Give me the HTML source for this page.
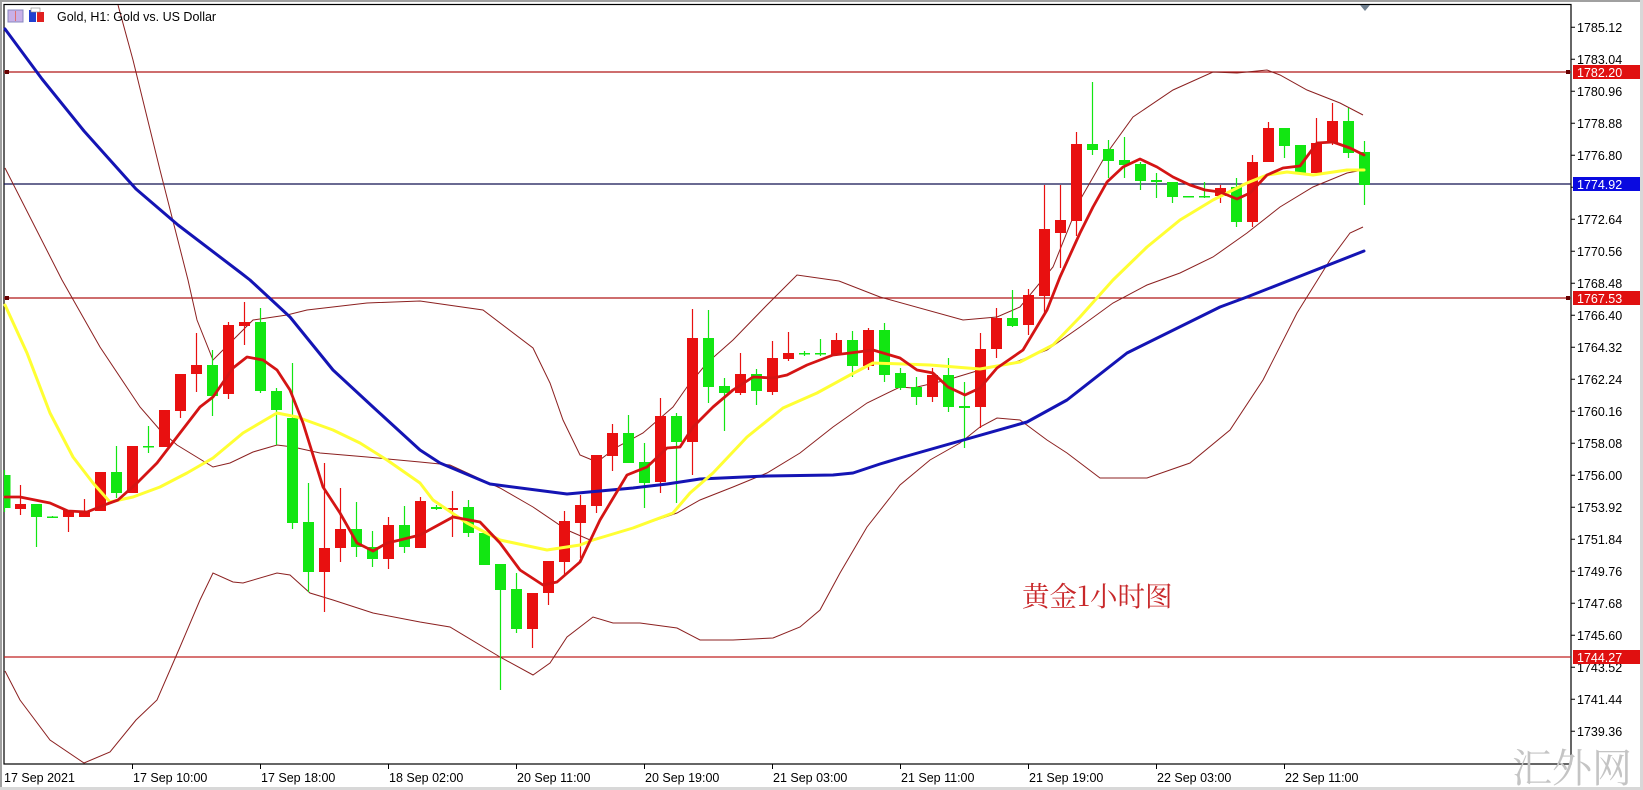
<!DOCTYPE html>
<html><head><meta charset="utf-8"><style>
html,body{margin:0;padding:0;background:#fff;width:1643px;height:790px;overflow:hidden}
svg{display:block}
text{font-family:"Liberation Sans",Tahoma,sans-serif;font-size:12.5px;fill:#000}
</style></head><body>
<svg width="1643" height="790" viewBox="0 0 1643 790" xmlns="http://www.w3.org/2000/svg">
<rect x="0" y="0" width="1643" height="790" fill="#fff"/>
<rect x="0" y="0" width="1643" height="2" fill="#a0a0a0"/>
<rect x="0" y="0" width="2" height="790" fill="#a0a0a0"/>
<rect x="0" y="787" width="1643" height="3" fill="#d8d8d8"/>
<rect x="1640" y="0" width="3" height="790" fill="#d8d8d8"/>
<!-- frame -->
<rect x="4" y="4.5" width="1567" height="759.5" fill="none" stroke="#000" stroke-width="1.2"/>
<!-- horizontal lines -->
<g stroke-width="1.2">
<line x1="4" x2="1571" y1="72" y2="72" stroke="#b01818"/>
<line x1="4" x2="1571" y1="184" y2="184" stroke="#101050"/>
<line x1="4" x2="1571" y1="298" y2="298" stroke="#b01818"/>
<line x1="4" x2="1571" y1="657" y2="657" stroke="#c02020"/>
</g>
<g fill="#600">
<rect x="5" y="70" width="4" height="4"/><rect x="1566" y="70" width="4" height="4"/>
<rect x="5" y="296" width="4" height="4"/><rect x="1566" y="296" width="4" height="4"/>
</g>
<!-- bollinger -->
<g fill="none" stroke="#8b2020" stroke-width="1">
<polyline points="118,5 133,60 160,170 188,280 197,320 213,360 233,340 253,320 287,315 307,310 367,303 420,301 483,310 533,348 550,383 563,420 580,455 597,462 617,447 643,433 673,407 687,387 707,363 733,340 767,305 797,275 839,281 880,297 963,320 997,317 1020,307 1053,267 1080,200 1107,153 1133,117 1173,90 1213,72 1237,73 1267,70 1280,75 1307,90 1340,103 1363,115"/>
<polyline points="5,168 62,280 100,347 140,407 160,430 177,445 213,467 230,463 253,452 277,445 293,447 320,453 367,457 420,462 450,465 500,488 533,507 567,530 590,540 633,528 677,513 700,500 733,487 767,473 800,453 833,427 867,403 900,387 913,388 947,380 980,370 1013,363 1047,350 1080,327 1113,303 1147,285 1180,273 1213,257 1247,233 1280,207 1313,187 1347,173 1363,170"/>
<polyline points="5,671 20,700 50,740 84,763 110,752 136,720 157,700 180,647 200,600 213,573 233,582 243,583 277,573 290,575 310,593 333,600 373,613 420,622 450,627 500,657 533,675 550,663 567,637 593,617 613,623 640,623 677,628 700,640 733,640 773,638 800,627 820,610 840,573 867,527 900,485 930,460 960,443 980,427 997,418 1020,420 1047,440 1067,453 1100,478 1147,478 1190,463 1230,430 1263,380 1297,313 1330,260 1350,233 1363,227"/>
</g>
<!-- green candles -->
<g stroke="#12e612" stroke-width="1.2" fill="none">
<path d="M4.5 470V512M36.5 504V547M52.5 516V518M116.5 446V498M148.5 426V453M212.5 350V416M260.5 308V393M276.5 388V445M292.5 363V529M308.5 483V592M356.5 502V557M372.5 531V567M404.5 506V553M436.5 505V510M468.5 500V537M484.5 533V565M500.5 564V690M516.5 573V633M628.5 415V463M644.5 443V508M676.5 413V503M708.5 310V403M724.5 378V431M756.5 369V405M804.5 351V356M820.5 339V356M852.5 331V377M884.5 323V382M900.5 368V390M916.5 377V405M948.5 358V412M964.5 382V448M1012.5 290V327M1092.5 82V155M1108.5 140V178M1124.5 137V178M1140.5 162V190M1156.5 173V198M1172.5 182V203M1204.5 182V198M1236.5 178V227M1284.5 128V158M1300.5 145V175M1348.5 108V158M1364.5 141V205"/>
</g>
<g fill="#12e612">
<rect x="5" y="475" width="5.5" height="33"/><rect x="31" y="504" width="11" height="13"/><rect x="47" y="516.5" width="11" height="1.5"/><rect x="111" y="472" width="11" height="21"/><rect x="143" y="446" width="11" height="1.5"/><rect x="207" y="365" width="11" height="31"/><rect x="255" y="322" width="11" height="69"/><rect x="271" y="391" width="11" height="19"/><rect x="287" y="418" width="11" height="105"/><rect x="303" y="522" width="11" height="50"/><rect x="351" y="529" width="11" height="18"/><rect x="367" y="547" width="11" height="12"/><rect x="399" y="525" width="11" height="22"/><rect x="431" y="507" width="11" height="2"/><rect x="463" y="507" width="11" height="26"/><rect x="479" y="533" width="11" height="32"/><rect x="495" y="564" width="11" height="26"/><rect x="511" y="589" width="11" height="40"/><rect x="623" y="433" width="11" height="30"/><rect x="639" y="462" width="11" height="21"/><rect x="671" y="416" width="11" height="26"/><rect x="703" y="338" width="11" height="49"/><rect x="719" y="386" width="11" height="7"/><rect x="751" y="374" width="11" height="17"/><rect x="799" y="353" width="11" height="1.5"/><rect x="815" y="353" width="11" height="1.5"/><rect x="847" y="340" width="11" height="26"/><rect x="879" y="330" width="11" height="45"/><rect x="895" y="373" width="11" height="15"/><rect x="911" y="387" width="11" height="10"/><rect x="943" y="375" width="11" height="32"/><rect x="959" y="406" width="11" height="2"/><rect x="1007" y="318" width="11" height="8"/><rect x="1087" y="144" width="11" height="6"/><rect x="1103" y="149" width="11" height="12"/><rect x="1119" y="160" width="11" height="5"/><rect x="1135" y="164" width="11" height="17"/><rect x="1151" y="180" width="11" height="2"/><rect x="1167" y="182" width="11" height="15"/><rect x="1183" y="196" width="11" height="1.5"/><rect x="1199" y="196" width="11" height="1.5"/><rect x="1231" y="187" width="11" height="35"/><rect x="1279" y="128" width="11" height="18"/><rect x="1295" y="145" width="11" height="28"/><rect x="1343" y="121" width="11" height="32"/><rect x="1359" y="152" width="11" height="33"/>
</g>
<!-- red candles -->
<g stroke="#e81010" stroke-width="1.2" fill="none">
<path d="M20.5 485V515M68.5 510V532M84.5 499V517M180.5 374V418M196.5 333V392M228.5 322V399M244.5 302V345M324.5 463V612M340.5 488V562M388.5 517V569M420.5 497V548M452.5 491V537M532.5 593V648M548.5 561V605M564.5 511V575M580.5 495V558M596.5 455V513M612.5 424V471M660.5 398V493M692.5 309V475M740.5 353V395M772.5 341V395M788.5 332V361M836.5 333V356M868.5 328V370M932.5 368V402M980.5 333V428M996.5 308V358M1028.5 289V335M1044.5 185V315M1060.5 185V268M1076.5 132V236M1220.5 185V203M1252.5 155V227M1268.5 122V162M1316.5 118V173M1332.5 103V145"/>
</g>
<g fill="#e81010">
<rect x="15" y="504" width="11" height="5"/><rect x="63" y="510" width="11" height="7"/><rect x="79" y="512" width="11" height="5"/><rect x="95" y="472" width="11" height="39"/><rect x="127" y="446" width="11" height="47"/><rect x="159" y="410" width="11" height="37"/><rect x="175" y="374" width="11" height="37"/><rect x="191" y="365" width="11" height="9"/><rect x="223" y="325" width="11" height="69"/><rect x="239" y="322" width="11" height="4"/><rect x="319" y="548" width="11" height="24"/><rect x="335" y="529" width="11" height="19"/><rect x="383" y="525" width="11" height="34"/><rect x="415" y="501" width="11" height="47"/><rect x="447" y="508" width="11" height="2"/><rect x="527" y="593" width="11" height="36"/><rect x="543" y="561" width="11" height="32"/><rect x="559" y="521" width="11" height="41"/><rect x="575" y="505" width="11" height="18"/><rect x="591" y="455" width="11" height="51"/><rect x="607" y="433" width="11" height="23"/><rect x="655" y="416" width="11" height="66"/><rect x="687" y="338" width="11" height="104"/><rect x="735" y="374" width="11" height="19"/><rect x="767" y="358" width="11" height="34"/><rect x="783" y="353" width="11" height="6"/><rect x="831" y="340" width="11" height="15"/><rect x="863" y="330" width="11" height="36"/><rect x="927" y="375" width="11" height="22"/><rect x="975" y="349" width="11" height="58"/><rect x="991" y="318" width="11" height="31"/><rect x="1023" y="295" width="11" height="30"/><rect x="1039" y="229" width="11" height="67"/><rect x="1055" y="220" width="11" height="13"/><rect x="1071" y="144" width="11" height="77"/><rect x="1215" y="188" width="11" height="8"/><rect x="1247" y="162" width="11" height="60"/><rect x="1263" y="128" width="11" height="34"/><rect x="1311" y="143" width="11" height="30"/><rect x="1327" y="121" width="11" height="22"/>
</g>
<!-- moving averages -->
<g fill="none" stroke-linejoin="round" stroke-linecap="round">
<polyline stroke="#1414b4" stroke-width="3" points="5,29 42,79 84,131 136,189 178,225 241,273 250,280 290,317 333,370 373,407 420,450 440,463 490,484 567,494 633,488 667,484 700,479 767,476 833,475 853,473 880,464 900,458 1027,422 1067,400 1127,353 1220,307 1247,297 1364,251"/>
<polyline stroke="#ffff33" stroke-width="3" points="5,305 27,353 50,413 73,457 93,483 110,502 133,497 160,487 187,473 213,458 243,433 277,413 297,417 333,430 360,443 387,460 420,483 433,500 467,523 500,540 547,550 580,545 593,540 633,528 673,513 690,493 713,473 747,437 783,408 817,393 850,375 873,363 930,365 980,369 1020,362 1053,345 1080,317 1113,280 1147,247 1180,220 1213,200 1247,183 1267,175 1287,172 1313,175 1347,170 1364,170"/>
<polyline stroke="#d41414" stroke-width="2.8" points="5,497 20,497 50,503 68,511 87,512 107,504 118,500 137,483 157,463 180,433 200,407 213,397 233,368 247,357 263,360 277,370 290,390 303,423 323,487 340,513 357,543 373,551 387,543 400,540 420,535 453,517 480,522 500,543 520,570 543,585 557,582 580,562 600,520 627,475 647,467 667,448 680,447 693,427 713,407 733,390 753,377 773,378 787,375 807,365 833,355 850,353 873,350 900,358 917,370 933,373 948,387 965,395 980,388 997,368 1023,350 1047,310 1060,277 1080,233 1093,207 1107,182 1123,167 1140,159 1157,167 1173,177 1190,185 1205,190 1220,192 1237,199 1250,193 1267,175 1283,168 1300,166 1317,143 1333,142 1350,148 1364,155"/>
</g>
<!-- title -->
<g>
<rect x="8" y="10" width="15" height="12" fill="#c8b0e8" stroke="#8888c0" stroke-width="1"/>
<line x1="15.5" y1="11" x2="15.5" y2="21" stroke="#e07070"/>
<rect x="29" y="10" width="7" height="12" fill="#2040d0"/><rect x="37" y="12" width="7" height="10" fill="#e02020"/>
<rect x="31" y="8" width="9" height="4" fill="#fff" stroke="#888" stroke-width="0.6"/>
</g>
<text x="57" y="21">Gold, H1:  Gold vs. US Dollar</text>
<path d="M1360 5 L1370 5 L1365 11 Z" fill="#708090"/>
<!-- chinese label -->
<text x="1022" y="606" style="font-family:'Noto Serif CJK SC','Liberation Serif',serif;font-size:27.5px;fill:#c8282a">黄金1小时图</text>
<!-- watermark -->
<text x="1512" y="782" style="font-family:'Noto Serif CJK SC','Liberation Serif',serif;font-size:40px;fill:#c4c4c4">汇外网</text>
<!-- price axis -->
<g stroke="#000" stroke-width="1">
<path d="M1571 27.3h4M1571 59.3h4M1571 91.3h4M1571 123.3h4M1571 155.3h4M1571 187.3h4M1571 219.3h4M1571 251.3h4M1571 283.3h4M1571 315.3h4M1571 347.3h4M1571 379.3h4M1571 411.3h4M1571 443.3h4M1571 475.3h4M1571 507.3h4M1571 539.3h4M1571 571.3h4M1571 603.3h4M1571 635.3h4M1571 667.3h4M1571 699.3h4M1571 731.3h4"/>
<path d="M132.5 764v5M260.5 764v5M388.5 764v5M516.5 764v5M644.5 764v5M772.5 764v5M900.5 764v5M1028.5 764v5M1156.5 764v5M1284.5 764v5"/>
</g>
<g>
<text x="1577" y="32">1785.12</text><text x="1577" y="64">1783.04</text><text x="1577" y="96">1780.96</text><text x="1577" y="128">1778.88</text><text x="1577" y="160">1776.80</text><text x="1577" y="224">1772.64</text><text x="1577" y="256">1770.56</text><text x="1577" y="288">1768.48</text><text x="1577" y="320">1766.40</text><text x="1577" y="352">1764.32</text><text x="1577" y="384">1762.24</text><text x="1577" y="416">1760.16</text><text x="1577" y="448">1758.08</text><text x="1577" y="480">1756.00</text><text x="1577" y="512">1753.92</text><text x="1577" y="544">1751.84</text><text x="1577" y="576">1749.76</text><text x="1577" y="608">1747.68</text><text x="1577" y="640">1745.60</text><text x="1577" y="672">1743.52</text><text x="1577" y="704">1741.44</text><text x="1577" y="736">1739.36</text>
</g>
<rect x="1573" y="65" width="67" height="14" fill="#e01010"/><text x="1577" y="77" style="fill:#fff">1782.20</text>
<rect x="1573" y="177" width="67" height="14" fill="#0a0ae0"/><text x="1577" y="189" style="fill:#fff">1774.92</text>
<rect x="1573" y="291" width="67" height="14" fill="#e01010"/><text x="1577" y="303" style="fill:#fff">1767.53</text>
<rect x="1573" y="650" width="67" height="14" fill="#e01010"/><text x="1577" y="662" style="fill:#fff">1744.27</text>
<!-- time axis -->
<g>
<text x="4" y="782">17 Sep 2021</text><text x="133" y="782">17 Sep 10:00</text><text x="261" y="782">17 Sep 18:00</text><text x="389" y="782">18 Sep 02:00</text><text x="517" y="782">20 Sep 11:00</text><text x="645" y="782">20 Sep 19:00</text><text x="773" y="782">21 Sep 03:00</text><text x="901" y="782">21 Sep 11:00</text><text x="1029" y="782">21 Sep 19:00</text><text x="1157" y="782">22 Sep 03:00</text><text x="1285" y="782">22 Sep 11:00</text>
</g>
</svg>
</body></html>
